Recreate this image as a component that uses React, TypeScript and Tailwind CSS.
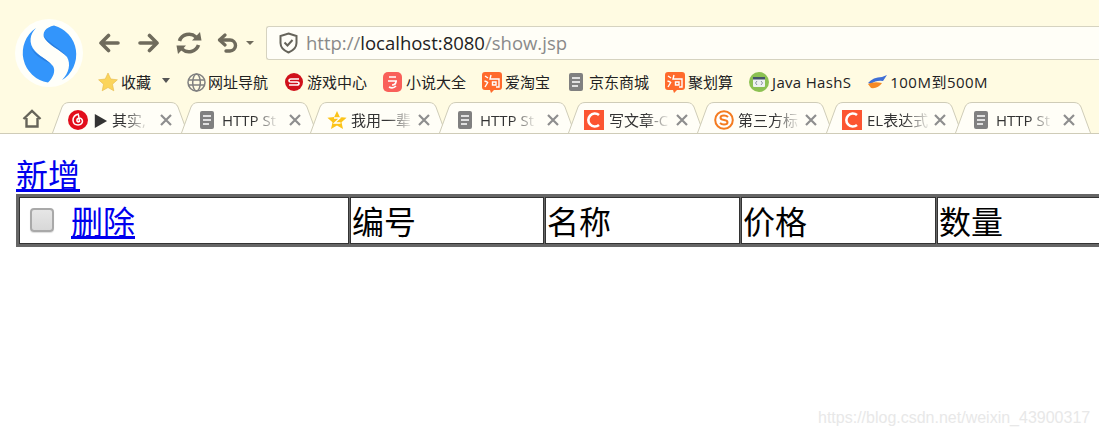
import type { ReactNode } from 'react';

const navStroke = '#6f6b5c';

function Logo() {
  return (
    <svg width="68" height="68" viewBox="0 0 68 68" className="shrink-0">
      <circle cx="34" cy="34" r="34" fill="#fffffa" />
      <path d="M21 9 C15 15 13 24 20 32 C25 38 33 41 38 47 C41 52 38 59 33 63.5 A30 30 0 0 1 21 9 Z" fill="#3395fb" />
      <path d="M39 6.5 C31 8 26 14 30 20 C35 27 47 31 52 38 C56 45 54 54 47 61 A30 30 0 0 0 39 6.5 Z" fill="#3395fb" />
      <path d="M15 27 C19 35 31 39 37 46 C32 42 20 39 15 27 Z M28 16 C33 24 46 29 52 38 C46 31 33 27 28 16 Z" fill="#2a7fe0" />
    </svg>
  );
}

function Arrow({ flip }: { flip?: boolean }) {
  return (
    <svg width="22" height="20" viewBox="0 0 22 20" className={flip ? 'rotate-180' : ''}>
      <path d="M20 10 H3 M10.5 2.5 L3 10 L10.5 17.5" fill="none" stroke={navStroke} strokeWidth="3.6" strokeLinecap="round" strokeLinejoin="round" />
    </svg>
  );
}

function NavButtons() {
  return (
    <div className="flex items-center">
      <Arrow />
      <div className="ml-[18px]"><Arrow flip /></div>
      <svg width="26" height="24" viewBox="0 0 26 24" className="ml-[16px]">
        <path d="M3.5 10 A10 9.5 0 0 1 20 6 M22.5 14 A10 9.5 0 0 1 6 18" fill="none" stroke={navStroke} strokeWidth="3.6" />
        <path d="M16 9.5 L25.5 9.5 L24 1 Z M10 14.5 L.5 14.5 L2 23 Z" fill={navStroke} />
      </svg>
      <svg width="21" height="20" viewBox="0 0 21 20" className="ml-[15px]">
        <path d="M3 7 H13 A5.5 5.5 0 0 1 13 18 H9" fill="none" stroke={navStroke} strokeWidth="3.4" strokeLinecap="round" />
        <path d="M8 2 L2.5 7 L8 12" fill="none" stroke={navStroke} strokeWidth="3.2" strokeLinecap="round" strokeLinejoin="round" />
      </svg>
      <div className="ml-[8px] w-0 h-0 border-x-[4px] border-x-transparent border-t-[4px] border-t-[#6f6b5c]" />
    </div>
  );
}

function AddressBar() {
  return (
    <div className="ml-[12px] h-[34px] flex-1 flex items-center pl-[12px] bg-[#fffef7] border border-r-0 border-[#d6d3c0] rounded-l-[3px]">
      <svg width="19" height="22" viewBox="0 0 19 22">
        <path d="M9.5 1.5 L17.5 4 V11 C17.5 16 13 19 9.5 20.5 C6 19 1.5 16 1.5 11 V4 Z" fill="none" stroke="#66645a" strokeWidth="2" />
        <path d="M5.5 10.5 L8.5 13.5 L13.5 8" fill="none" stroke="#66645a" strokeWidth="2" />
      </svg>
      <span className="ml-[8px] text-[18.5px] leading-none text-[#8a8a8a] font-['Open_Sans',sans-serif]">
        http://<span className="text-[#222]">localhost:8080</span>/show.jsp
      </span>
    </div>
  );
}

function DocIcon() {
  return (
    <svg width="14" height="18" viewBox="0 0 14 18" className="shrink-0">
      <rect width="14" height="18" rx="2" fill="#808080" />
      <path d="M3 5 H11 M3 9 H11 M3 13 H9" stroke="#fff" strokeWidth="1.4" />
    </svg>
  );
}

function Star() {
  return (
    <svg width="20" height="20" viewBox="0 0 20 20">
      <path d="M10 1 L12.8 7 L19.4 7.8 L14.5 12.2 L15.8 18.8 L10 15.5 L4.2 18.8 L5.5 12.2 L.6 7.8 L7.2 7 Z" fill="#fbd55b" stroke="#e6b94a" strokeWidth=".6" />
    </svg>
  );
}

function Globe() {
  return (
    <svg width="19" height="19" viewBox="0 0 19 19">
      <g fill="none" stroke="#808080" strokeWidth="1.5">
        <circle cx="9.5" cy="9.5" r="8.5" />
        <ellipse cx="9.5" cy="9.5" rx="3.8" ry="8.5" />
        <path d="M1 7 H18 M1 12 H18" />
      </g>
    </svg>
  );
}

function SinaIcon() {
  return (
    <svg width="18" height="18" viewBox="0 0 18 18">
      <circle cx="9" cy="9" r="9" fill="#d0111b" />
      <path d="M14 6 H6 Q4 6 4 8 Q4 9 6 9 H12 Q14 9 14 10.5 Q14 12 12 12 H4" fill="none" stroke="#fff" strokeWidth="1.6" />
    </svg>
  );
}

function NovelIcon() {
  return (
    <svg width="19" height="20" viewBox="0 0 19 20">
      <rect width="19" height="20" rx="5" fill="#f9605a" />
      <path d="M6 5 H13 M5 9 H14 M13 9 Q13 13 9 13 M6 15 Q10 17 13 14" fill="none" stroke="#fff" strokeWidth="1.7" />
    </svg>
  );
}

function TaobaoIcon() {
  return (
    <svg width="20" height="21" viewBox="0 0 20 21">
      <path d="M3 0 H17 Q20 0 20 3 V15 Q20 18 17 18 H12 L9 21 L8 18 H3 Q0 18 0 15 V3 Q0 0 3 0 Z" fill="#ff6a2c" />
      <path d="M3 4 L6 6 M2.5 9 L5.5 10 M3 15 L6 10 M9 3 L8 7 H17 V15 H14 M10.5 10 H14 V13 H10.5 Z" fill="none" stroke="#fff" strokeWidth="1.4" />
    </svg>
  );
}

function JavaIcon() {
  return (
    <svg width="20" height="20" viewBox="0 0 20 20">
      <circle cx="10" cy="10" r="10" fill="#8cc152" />
      <rect x="4" y="5" width="12" height="10" rx="1" fill="#eef1f2" />
      <rect x="4" y="5" width="12" height="2.5" fill="#44546a" />
      <path d="M8 9 L6.5 11 L8 13 M12 9 L13.5 11 L12 13" fill="none" stroke="#7b8794" strokeWidth=".9" />
    </svg>
  );
}

function BoostIcon() {
  return (
    <svg width="19" height="14" viewBox="0 0 19 14">
      <path d="M0 8 Q5 2 14 2 L19 0 L15 6 Q8 5 3 9 Z" fill="#3f6fd6" />
      <path d="M0 9 Q6 6 14 8 Q10 14 3 13 Z" fill="#f58a26" />
    </svg>
  );
}

function Bookmark({ icon, label, className }: { icon: ReactNode; label: string; className: string }) {
  return (
    <div className={`flex items-center ${className}`}>
      {icon}
      <span className="text-[15px] leading-none text-[#222] whitespace-nowrap">{label}</span>
    </div>
  );
}

function Bookmarks() {
  return (
    <div className="mt-[10px] h-[24px] flex items-center">
      <Star />
      <span className="ml-[3px] text-[15px] leading-none text-[#222]">收藏</span>
      <div className="ml-[11px] mb-[4px] w-0 h-0 border-x-[4px] border-x-transparent border-t-[5px] border-t-[#555]" />
      <Bookmark icon={<Globe />} label="网址导航" className="ml-[17px] gap-[2px]" />
      <Bookmark icon={<SinaIcon />} label="游戏中心" className="ml-[17px] gap-[4px]" />
      <Bookmark icon={<NovelIcon />} label="小说大全" className="ml-[16px] gap-[4px]" />
      <Bookmark icon={<TaobaoIcon />} label="爱淘宝" className="ml-[16px] gap-[3px]" />
      <Bookmark icon={<DocIcon />} label="京东商城" className="ml-[19px] gap-[6px]" />
      <Bookmark icon={<TaobaoIcon />} label="聚划算" className="ml-[16px] gap-[3px]" />
      <Bookmark icon={<JavaIcon />} label="Java HashS" className="ml-[16px] gap-[3px] tracking-[0.3px]" />
      <Bookmark icon={<BoostIcon />} label="100M到500M" className="ml-[17px] gap-[3px] tracking-[0.5px]" />
    </div>
  );
}

function NeteaseIcon() {
  return (
    <svg width="20" height="20" viewBox="0 0 20 20" className="shrink-0">
      <circle cx="10" cy="10" r="10" fill="#e20e1c" />
      <path d="M11 4 Q5 5 5 10.5 Q5.5 15 10 15 Q14.5 14.5 14.5 11 Q14 8 11 8 Q8.5 8.5 9 11 Q10 12.5 11.5 11.5 L10.5 5" fill="none" stroke="#fff" strokeWidth="1.5" />
    </svg>
  );
}

function QzoneIcon() {
  return (
    <svg width="20" height="18" viewBox="0 0 20 18" className="shrink-0">
      <path d="M10 0 L12.8 6 L19.6 6.8 L14.5 11.2 L16 18 L10 14.6 L4 18 L5.5 11.2 L.4 6.8 L7.2 6 Z" fill="#fcc419" />
      <path d="M7 7 H13 L7.5 12 H13.5" fill="none" stroke="#fff" strokeWidth="1.3" />
    </svg>
  );
}

function CsdnIcon() {
  return (
    <svg width="20" height="20" viewBox="0 0 20 20" className="shrink-0">
      <rect width="20" height="20" fill="#fc5531" />
      <path d="M15 5 A6.5 6.5 0 1 0 15 15" fill="none" stroke="#fff" strokeWidth="2.6" />
    </svg>
  );
}

function SogouIcon() {
  return (
    <svg width="20" height="20" viewBox="0 0 20 20" className="shrink-0">
      <circle cx="10" cy="10" r="8.8" fill="#fff" stroke="#f47b20" strokeWidth="2" />
      <path d="M14 7 Q12.5 5.5 10 5.5 Q6.5 5.5 6.5 7.8 Q6.5 9.6 10 10 Q13.5 10.4 13.5 12.3 Q13.5 14.5 10 14.5 Q7.5 14.5 6 13" fill="none" stroke="#f47b20" strokeWidth="2" />
    </svg>
  );
}

const tabs: { icon: ReactNode; label: string; spacing: string }[] = [
  { icon: <NeteaseIcon />, label: '▶ 其实,', spacing: 'pl-[16px] gap-[5px]' },
  { icon: <DocIcon />, label: 'HTTP St', spacing: 'pl-[19px] gap-[8px]' },
  { icon: <QzoneIcon />, label: '我用一辈', spacing: 'pl-[17px] gap-[4px]' },
  { icon: <DocIcon />, label: 'HTTP St', spacing: 'pl-[19px] gap-[8px]' },
  { icon: <CsdnIcon />, label: '写文章-C', spacing: 'pl-[16px] gap-[5px]' },
  { icon: <SogouIcon />, label: '第三方标', spacing: 'pl-[17px] gap-[4px]' },
  { icon: <CsdnIcon />, label: 'EL表达式', spacing: 'pl-[16px] gap-[5px]' },
  { icon: <DocIcon />, label: 'HTTP St', spacing: 'pl-[19px] gap-[8px]' },
];

function Tab({ icon, label, spacing }: { icon: ReactNode; label: string; spacing: string }) {
  return (
    <div className="relative w-[136px] h-[31px] shrink-0 -mr-[7px]">
      <svg width="136" height="31" viewBox="0 0 136 31" className="absolute inset-0">
        <path d="M0.5 31 L10 5 Q12 .5 17 .5 H119 Q124 .5 126 5 L135.5 31" fill="#fffef7" stroke="#cfccb8" />
      </svg>
      <div className={`relative h-full flex items-center pt-[5px] ${spacing}`}>
        {icon}
        <span className="whitespace-nowrap text-[15px] leading-none text-[#333] [mask-image:linear-gradient(to_right,black_60%,transparent_105%)]">
          {label}
        </span>
        <svg width="12" height="12" viewBox="0 0 12 12" className="absolute left-[108px] top-[12px]">
          <path d="M1 1 L11 11 M11 1 L1 11" stroke="#8e8e8e" strokeWidth="2.2" />
        </svg>
      </div>
    </div>
  );
}

function TabStrip() {
  return (
    <div className="h-[32px] flex items-end border-b border-[#cfccb8]">
      <svg width="20" height="20" viewBox="0 0 20 20" className="ml-[22px] mr-[10px] mb-[4px] shrink-0">
        <path d="M1.5 10 L10 2 L18.5 10 M4.5 9 V17.5 H15.5 V9" fill="none" stroke="#66645a" strokeWidth="2.4" />
      </svg>
      {tabs.map((tab, i) => (
        <Tab key={i} {...tab} />
      ))}
    </div>
  );
}

export default function App() {
  return (
    <div className="relative w-[1099px] h-[437px] overflow-hidden bg-white font-['Open_Sans','Noto_Sans_CJK_SC',sans-serif]">
      <div className="bg-[#fffbe2]">
        <div className="flex pl-[15px] pt-[19px] h-[102px]">
          <Logo />
          <div className="flex-1 ml-[15px] pt-[7px]">
            <div className="flex items-center">
              <NavButtons />
              <AddressBar />
            </div>
            <Bookmarks />
          </div>
        </div>
        <TabStrip />
      </div>

      <div className="pt-[25px] px-[16px] text-[32px] leading-[35px] text-black font-['Liberation_Serif','Noto_Sans_CJK_SC',serif]">
        <a href="#" className="text-[#0000ee] underline">新增</a>
        <table className="w-[1120px] table-fixed border-separate border-spacing-[1px] bg-[#666] border-2 border-[#666]">
          <tbody>
            <tr className="h-[47px]">
              <td className="w-[330px] bg-white border border-[#333] pl-[10px] pt-[5px]">
                <div className="flex items-center">
                  <div className="mb-[6px] w-[24px] h-[24px] rounded-[4px] border-2 border-[#a9a9a9] bg-gradient-to-b from-[#e6e6e6] to-[#d8d8d8] shadow-[0_1px_1px_#ddd]" />
                  <a href="#" className="ml-[17px] text-[#0000ee] underline">删除</a>
                </div>
              </td>
              <td className="w-[194px] bg-white border border-[#333] pl-[1px] pt-[5px]">编号</td>
              <td className="w-[195px] bg-white border border-[#333] pl-[1px] pt-[5px]">名称</td>
              <td className="w-[195px] bg-white border border-[#333] pl-[1px] pt-[5px]">价格</td>
              <td className="bg-white border border-[#333] pl-[1px] pt-[5px]">数量</td>
            </tr>
          </tbody>
        </table>
      </div>

      <div className="absolute left-[818px] top-[410px] text-[16px] leading-none text-[#e8e8e8] font-['Liberation_Sans',sans-serif]">
        https://blog.csdn.net/weixin_43900317
      </div>
    </div>
  );
}
